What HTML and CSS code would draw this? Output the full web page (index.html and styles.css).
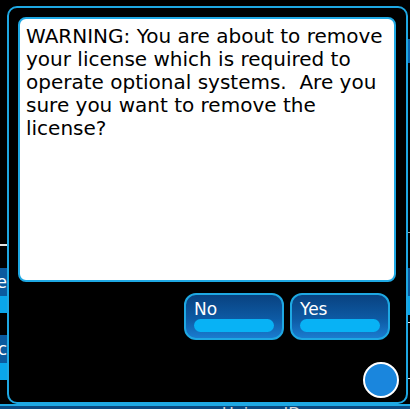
FILE: index.html
```html
<!DOCTYPE html>
<html lang="en">
  <head>
    <meta charset="UTF-8" />
    <meta name="viewport" content="width=device-width, initial-scale=1.0" />
    <title>Remove License</title>
    <link rel="stylesheet" href="styles.css">
  </head>
  <body>
    <div class="screen">
      <div class="side side-left">
        <div class="rule rule-first"></div>
        <div class="side-btn side-btn-first">
          <div class="side-btn-label">Install License</div>
          <div class="side-btn-glow"></div>
        </div>
        <div class="side-btn">
          <div class="side-btn-label">Diagnostic</div>
          <div class="side-btn-glow"></div>
        </div>
      </div>
      <div class="main"></div>
      <div class="side side-right">
        <div class="side-tab"></div>
        <div class="rule rule-right"></div>
        <div class="side-btn side-btn-right">
          <div class="side-btn-label"></div>
          <div class="side-btn-glow"></div>
        </div>
        <div class="rule rule-thin"></div>
        <div class="rule rule-low"></div>
      </div>
      <div class="footer">
        <span class="footer-text">Unique ID</span>
      </div>
    </div>

    <div class="dialog">
      <div class="message">
        WARNING: You are about to remove your license which is required to
        operate optional systems.&nbsp; Are you sure you want to remove the
        license?
      </div>

      <div class="dialog-actions">
        <button class="dialog-button" id="btn-no">
          <span class="dialog-button-text">No</span>
          <span class="dialog-button-glow"></span>
        </button>
        <button class="dialog-button" id="btn-yes">
          <span class="dialog-button-text">Yes</span>
          <span class="dialog-button-glow"></span>
        </button>
      </div>

      <div class="dialog-footer">
        <div class="status-dot"></div>
      </div>
    </div>
  </body>
</html>
```

FILE: styles.css
```css
body {
  margin: 0;
  width: 410px;
  height: 409px;
  overflow: hidden;
  background: #000;
  font-family: "DejaVu Sans", Verdana, sans-serif;
  position: relative;
}

/* screen behind the dialog */
.screen {
  display: grid;
  grid-template-columns: 7px 1fr 3px;
  grid-template-rows: 404px 5px;
  height: 409px;
}

.side {
  display: flex;
  flex-direction: column;
  overflow: hidden;
}

.rule {
  height: 2px;
  background: #e6e6e6;
}

.rule-first {
  margin-top: 244px;
}

.side-btn {
  height: 45px;
  display: flex;
  flex-direction: column;
  margin-top: 22px;
}

.side-btn-label {
  height: 28px;
  background: #0b5a9e;
  color: #fff;
  font-size: 17px;
  line-height: 28px;
  white-space: nowrap;
  direction: rtl;
}

.side-btn-glow {
  flex: 1;
  background: #0aa6ea;
}

.side-tab {
  margin-top: 39px;
  height: 24px;
  background: #0b66b0;
}

.rule-right {
  margin-top: 169px;
  height: 1px;
  background: #9aa;
}

.side-btn-right {
  margin-top: 35px;
  height: 47px;
}

.rule-thin {
  margin-top: 7px;
  height: 1px;
}

.rule-low {
  margin-top: 55px;
  height: 1px;
}

.footer {
  grid-column: 1 / 4;
  border-top: 2px solid #1ea8e3;
  background: #0a4a82;
  overflow: hidden;
  padding-left: 222px;
}

.footer-text {
  display: block;
  color: #d8d8d8;
  font-size: 16px;
  line-height: 16px;
  margin-top: 0;
}

/* dialog overlay */
.dialog {
  position: absolute;
  left: 7px;
  top: 6px;
  width: 388px;
  height: 385px;
  border: 2px solid #1ea8e3;
  border-radius: 10px;
  background: #000;
  display: flex;
  flex-direction: column;
  padding: 9px 0 0 9px;
}

.message {
  width: 364px;
  height: 255px;
  background: #fff;
  border: 2px solid #1ea8e3;
  border-radius: 8px;
  padding: 6px 4px 0 6px;
  font-size: 20px;
  line-height: 23px;
  color: #000;
}

.dialog-actions {
  display: flex;
  justify-content: flex-end;
  gap: 6px;
  margin-top: 11px;
  padding-right: 6px;
  width: 378px;
  box-sizing: border-box;
}

.dialog-button {
  width: 100px;
  height: 47px;
  border: 2px solid #1ea8e3;
  border-radius: 12px;
  background: linear-gradient(#094280, #0d5aa4 55%, #1a7cd0);
  display: flex;
  flex-direction: column;
  align-items: stretch;
  padding: 5px 7px 6px 7px;
  box-sizing: border-box;
  cursor: pointer;
  font-family: inherit;
}

.dialog-button-text {
  color: #fff;
  font-size: 17px;
  line-height: 18px;
  text-align: left;
  padding-left: 1px;
}

.dialog-button-glow {
  display: block;
  height: 13px;
  margin: 1px 1px 0 1px;
  border-radius: 7px;
  background: #08b2f5;
}

.dialog-footer {
  flex: 1;
  display: flex;
  justify-content: flex-end;
  align-items: flex-end;
  padding: 0 7px 4px 0;
}

.status-dot {
  width: 32px;
  height: 32px;
  border: 2px solid #fff;
  border-radius: 50%;
  background: #1a86dd;
}
```
